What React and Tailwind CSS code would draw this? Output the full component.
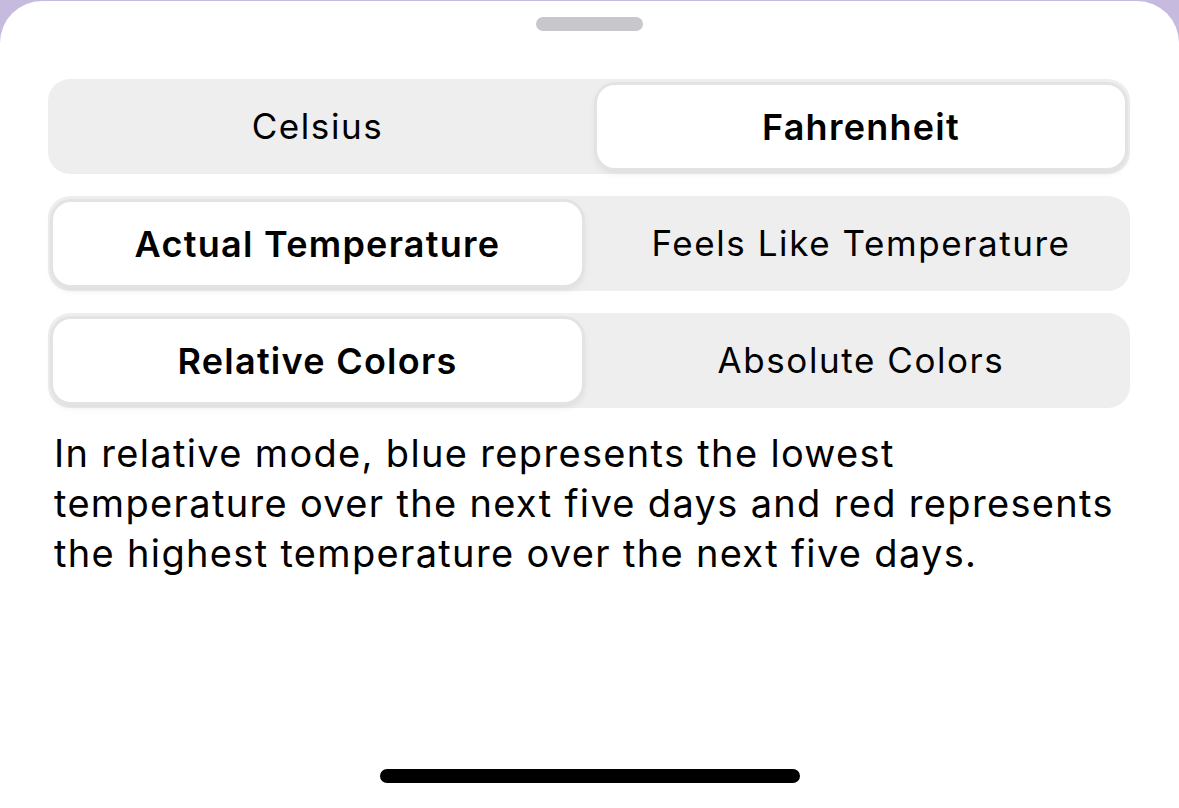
import { useState } from 'react';

function Segmented({ options, value, onChange }) {
  return (
    <div className="flex h-[95px] rounded-[22px] bg-[#eeeeee] p-[2px]">
      {options.map((opt, i) => {
        const active = opt === value;
        const side = i === 0 ? 'ml-[3px] mr-[7px]' : 'ml-[8px] mr-[3px]';
        return (
          <div key={opt} className="flex flex-1">
            <button
              onClick={() => onChange(opt)}
              className={
                active
                  ? `${side} my-[4px] flex-1 rounded-[18px] bg-white text-[36px] font-semibold tracking-[0.035em] text-black ring-[3px] ring-[#e3e3e3] shadow-[0_4px_8px_rgba(0,0,0,0.10)]`
                  : `${side} my-[4px] flex-1 rounded-[18px] text-[35px] font-normal tracking-[0.045em] text-black`
              }
            >
              {opt}
            </button>
          </div>
        );
      })}
    </div>
  );
}

export default function App() {
  const [unit, setUnit] = useState('Fahrenheit');
  const [temp, setTemp] = useState('Actual Temperature');
  const [colors, setColors] = useState('Relative Colors');

  return (
    <div className="h-[808px] w-[1179px] bg-[#c6bbdf] pt-px font-['Inter',sans-serif]">
      <div className="flex h-[807px] flex-col rounded-t-[42px] bg-white">
        <div className="flex justify-center pt-[16px]">
          <div className="h-[14px] w-[107px] rounded-full bg-[#c8c8cc]" />
        </div>
        <div className="mt-[48px] flex flex-col gap-[22px] pl-[48px] pr-[49px]">
          <Segmented options={['Celsius', 'Fahrenheit']} value={unit} onChange={setUnit} />
          <Segmented options={['Actual Temperature', 'Feels Like Temperature']} value={temp} onChange={setTemp} />
          <Segmented options={['Relative Colors', 'Absolute Colors']} value={colors} onChange={setColors} />
        </div>
        <p className="ml-[54px] mt-[20px] w-[1070px] text-[38px] leading-[50px] tracking-[0.035em] text-black">
          In relative mode, blue represents the lowest temperature over the next five days and red represents the highest temperature over the next five days.
        </p>
        <div className="mt-auto flex justify-center pb-[25px]">
          <div className="h-[14px] w-[420px] rounded-full bg-black" />
        </div>
      </div>
    </div>
  );
}
